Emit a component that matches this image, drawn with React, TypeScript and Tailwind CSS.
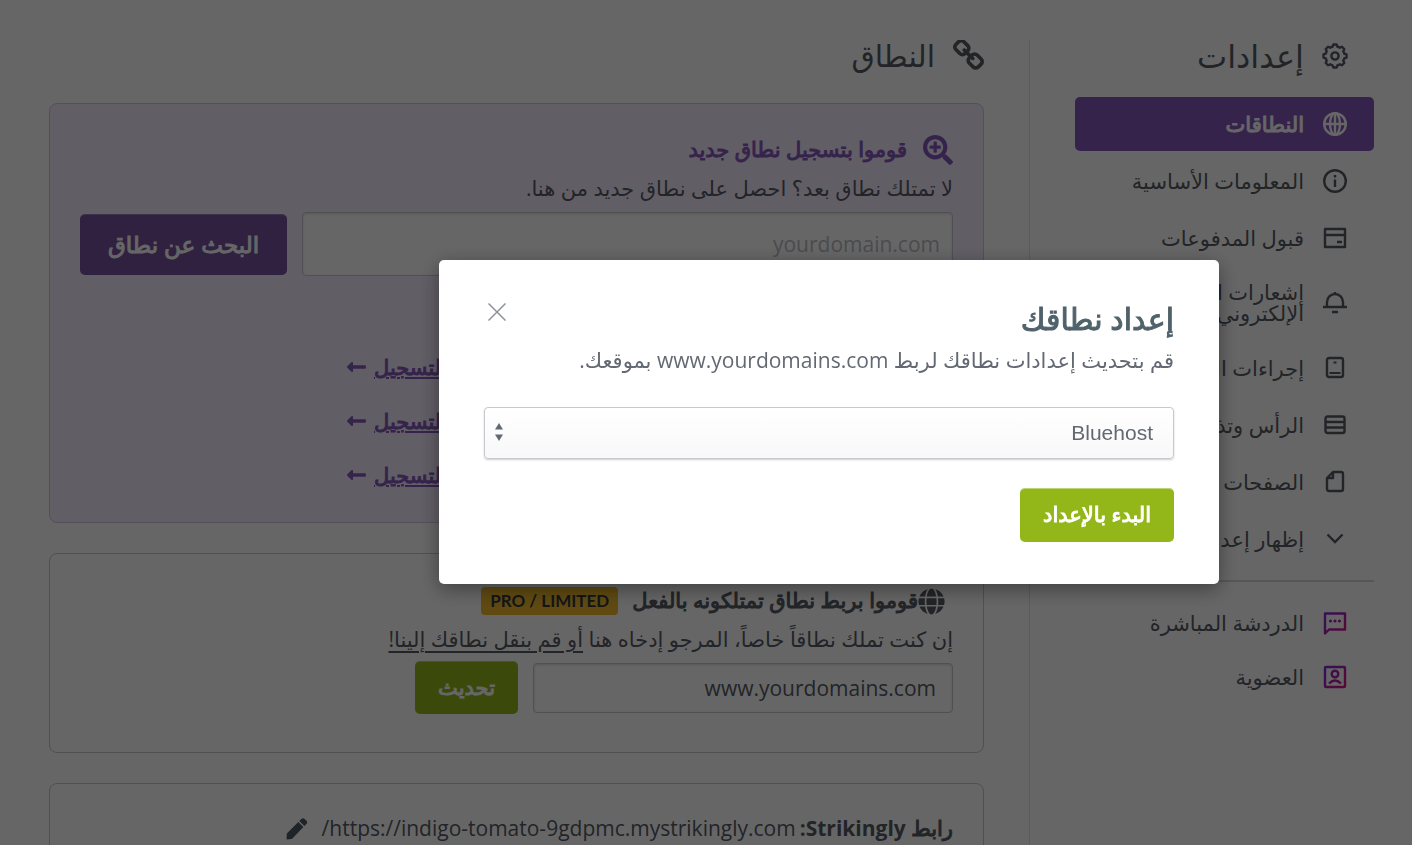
import type { ReactNode } from 'react'
import { FaGlobe, FaSearchPlus } from 'react-icons/fa'

interface NavItem {
  label: string
  icon: ReactNode
  active?: boolean
  tall?: boolean
}

function Icon({ children }: { children: ReactNode }) {
  return (
    <svg viewBox="0 0 24 24" className="w-6 h-6 shrink-0" fill="none" stroke="currentColor" strokeWidth={2.4} strokeLinejoin="round" aria-hidden="true">
      {children}
    </svg>
  )
}

const gearPoints = Array.from({ length: 8 }, (_, i) => i * 45)
  .flatMap(deg => [[deg - 15, 9.6], [deg - 8, 11.6], [deg + 8, 11.6], [deg + 15, 9.6]])
  .map(([deg, r]) => {
    const a = (deg * Math.PI) / 180
    return `${(13 + r * Math.sin(a)).toFixed(2)},${(13 - r * Math.cos(a)).toFixed(2)}`
  })
  .join(' ')

function GearIcon() {
  return (
    <svg viewBox="0 0 26 26" className="w-[26px] h-[26px] shrink-0" fill="none" stroke="currentColor" strokeWidth={2.4} strokeLinejoin="round" aria-hidden="true">
      <polygon points={gearPoints} />
      <circle cx="13" cy="13" r="3.6" />
    </svg>
  )
}

function ChainIcon() {
  return (
    <svg viewBox="80 80 1632 1632" className="w-[31px] h-[31px] shrink-0" fill="currentColor" aria-hidden="true">
      <path d="M1520 1216q0-40-28-68l-208-208q-28-28-68-28-42 0-72 32 3 3 19 18.500t21.500 21.500 15 19 13 25.500 3.500 27.500q0 40-28 68t-68 28q-15 0-27.500-3.500t-25.500-13-19-15-21.500-21.500-18.500-19q-33 31-33 73 0 40 28 68l206 207q27 27 68 27 40 0 68-26l147-146q28-28 28-67zm-703-705q0-40-28-68l-206-207q-28-28-68-28-39 0-68 27l-147 146q-28 28-28 67 0 40 28 68l208 208q27 27 68 27 42 0 72-31-3-3-19-18.500t-21.500-21.500-15-19-13-25.500-3.500-27.500q0-40 28-68t68-28q15 0 27.500 3.500t25.500 13 19 15 21.500 21.500 18.500 19q33-31 33-73zm895 705q0 120-85 203l-147 146q-83 83-203 83-121 0-204-85l-206-207q-83-83-83-203 0-123 88-209l-88-88q-86 88-208 88-120 0-204-84l-208-208q-84-84-84-204t85-203l147-146q83-83 203-83 121 0 204 85l206 207q83 83 83 203 0 123-88 209l88 88q86-88 208-88 120 0 204 84l208 208q84 84 84 204z" />
    </svg>
  )
}

function PencilIcon() {
  return (
    <svg viewBox="0 0 22 22" className="w-[22px] h-[22px]" fill="currentColor" aria-hidden="true">
      <path d="M0.800 15.600 12.300 4l5.100 5.100L6.400 20.400q-.6.600-1.400.700l-3.600.400q-.9 0-.9-.9zM13.300 3l2-2a2.400 2.400 0 0 1 3.400 0l1.700 1.700a2.400 2.400 0 0 1 0 3.400l-2 2z" />
    </svg>
  )
}

function ArrowLeftIcon() {
  return (
    <svg viewBox="0 0 19 10" className="w-[19px] h-[10px]" fill="currentColor" aria-hidden="true">
      <path d="M0.300 4.300 4.400.3Q6-.5 6 1v2.200H18q.9 0 .9.800v2q0 .8-.9.800H6V9q0 1.500-1.600.7L.3 5.700q-.6-.7 0-1.400z" />
    </svg>
  )
}

const navItems: NavItem[] = [
  {
    label: 'النطاقات',
    active: true,
    icon: <Icon><circle cx="12" cy="12" r="10.800" /><ellipse cx="12" cy="12" rx="5" ry="10.800" /><path d="M1 12h22M12 1v22" /></Icon>,
  },
  {
    label: 'المعلومات الأساسية',
    icon: <Icon><circle cx="12" cy="12" r="10.800" /><path d="M12 6v2.500M12 10.500V18" /></Icon>,
  },
  {
    label: 'قبول المدفوعات',
    icon: <Icon><path d="M2 3h20v18H2zM2 9h20M14 16h5" /></Icon>,
  },
  {
    label: 'إشعارات البريد الإلكتروني',
    tall: true,
    icon: <Icon><path d="M0 16h24M4 16v-5a8 8 0 0 1 16 0v5M12 3V1M9 21h6" /></Icon>,
  },
  {
    label: 'إجراءات الخصوصية',
    icon: <Icon><rect x="4" y="2" width="16" height="19" rx="2" /><path d="M6.500 17h11M10.500 6.500h3" strokeWidth={2} /></Icon>,
  },
  {
    label: 'الرأس وتذييل الصفحة',
    icon: <Icon><rect x="2.500" y="3.500" width="19" height="16.500" rx="2" /><path d="M2.500 9h19M2.500 14.500h19" /></Icon>,
  },
  {
    label: 'الصفحات',
    icon: <Icon><path d="M10 2h8q2 0 2 2v15q0 2-2 2H6q-2 0-2-2V8zM10 2v6H4" /></Icon>,
  },
  {
    label: 'إظهار إعدادات متقدمة',
    icon: <Icon><path d="m4.500 7.500 7.500 7.500 7.500-7.500" strokeLinejoin="miter" /></Icon>,
  },
]

function Gradient({ id }: { id: string }) {
  return (
    <defs>
      <linearGradient id={id} x1="0" y1="0" x2="24" y2="24" gradientUnits="userSpaceOnUse">
        <stop offset="0" stopColor="#7a2fe0" />
        <stop offset="1" stopColor="#e6127a" />
      </linearGradient>
    </defs>
  )
}

const helpItems: NavItem[] = [
  {
    label: 'الدردشة المباشرة',
    icon: (
      <Icon>
        <Gradient id="chat" />
        <path d="M2 2.500h20v16H6l-4 4z" stroke="url(#chat)" />
        <g fill="url(#chat)" stroke="none">
          <circle cx="7.500" cy="10" r="1.600" />
          <circle cx="12" cy="10" r="1.600" />
          <circle cx="16.500" cy="10" r="1.600" />
        </g>
      </Icon>
    ),
  },
  {
    label: 'العضوية',
    icon: (
      <Icon>
        <Gradient id="member" />
        <rect x="2" y="2" width="20" height="20" rx="1" stroke="url(#member)" />
        <circle cx="12" cy="9" r="3.300" stroke="url(#member)" />
        <path d="M6 18.500q6-6 12 0" stroke="url(#member)" />
      </Icon>
    ),
  },
]

function NavLink({ item }: { item: NavItem }) {
  return (
    <a
      href="#"
      className={`flex items-center gap-[19px] pr-[27px] pl-4 rounded-[5px] text-[21px] leading-[21px] ${item.tall ? 'h-[70px]' : 'h-[54px]'} ${item.active ? 'bg-[#8759be] text-white [-webkit-text-stroke:1px]' : 'text-[#565b64]'}`}
    >
      {item.icon}
      <span className={item.tall ? 'w-[150px]' : 'whitespace-nowrap'}>{item.label}</span>
    </a>
  )
}

function SettingsNav() {
  return (
    <aside className="w-[299px] shrink-0">
      <h1 className="flex items-center gap-[18px] h-8 pr-[26px] text-[32px] leading-8 text-[#565b64]">
        <GearIcon />
        إعدادات
      </h1>
      <nav className="mt-[25px]">
        <div className="flex flex-col gap-[3px]">
          {navItems.map(item => <NavLink key={item.label} item={item} />)}
        </div>
        <hr className="my-[14px] border-t-2 border-[#d6d8dc]" />
        {helpItems.map(item => <NavLink key={item.label} item={item} />)}
      </nav>
    </aside>
  )
}

function RegisterCard() {
  return (
    <section className="h-[420px] px-[30px] pt-[30px] border border-[#cfc8e0] rounded-lg bg-[#f4ebff]">
      <h3 className="flex items-center gap-4 h-8 text-[21px] text-[#8759be] [-webkit-text-stroke:1px]">
        <FaSearchPlus className="w-[30px] h-[30px]" />
        قوموا بتسجيل نطاق جديد
      </h3>
      <p className="mt-[6px] h-8 text-[21px] leading-8 text-[#565b64]">لا تمتلك نطاق بعد؟ احصل على نطاق جديد من هنا.</p>
      <div className="flex items-center gap-[15px] mt-2">
        <input
          aria-label="نطاق جديد"
          placeholder="yourdomain.com"
          className="flex-1 min-w-0 h-16 px-3 border border-[#c6c9cd] rounded bg-white text-[21px] placeholder:text-[#b9bcc2] shadow-[inset_0_1px_3px_rgba(0,0,0,0.15)]"
        />
        <button className="h-[61px] px-7 rounded-[5px] bg-[#7853a2] text-white text-[23px] [-webkit-text-stroke:1px] shadow-[inset_0_2px_0_-1px_rgba(255,255,255,0.25)]">
          البحث عن نطاق
        </button>
      </div>
      <ul className="flex flex-col gap-[22px] mt-[75px] pl-[267px]">
        {['com', 'net', 'org'].map(tld => (
          <li key={tld} className="flex justify-end h-8 text-[21px] leading-8 text-[#8759be]">
            <a href="#" className="flex items-center gap-2">
              <span className="underline underline-offset-2 decoration-2 [-webkit-text-stroke:1px]">التسجيل</span>
              <ArrowLeftIcon />
            </a>
          </li>
        ))}
      </ul>
    </section>
  )
}

function ConnectCard() {
  return (
    <section className="h-[200px] px-[30px] pt-[31px] border border-[#c6c9cd] rounded-lg">
      <div className="flex items-center h-8">
        <h3 className="flex items-center pr-2 text-[21px] text-[#565b64] [-webkit-text-stroke:1px]">
          <FaGlobe className="w-[27px] h-[27px]" />
          قوموا بربط نطاق تمتلكونه بالفعل
        </h3>
        <span className="mr-[14px] px-[9px] rounded bg-[#efb92d] font-['Lato'] text-[17px] leading-7 font-bold text-[#33363b]" dir="ltr">PRO / LIMITED</span>
      </div>
      <p className="mt-[6px] h-8 text-[21px] leading-8 text-[#565b64]">
        إن كنت تملك نطاقاً خاصاً، المرجو إدخاه هنا <a href="#" className="underline underline-offset-4 decoration-2">أو قم بنقل نطاقك إلينا!</a>
      </p>
      <div className="flex items-center gap-[15px] mt-[6px]">
        <input
          aria-label="نطاقك"
          defaultValue="www.yourdomains.com"
          className="w-[420px] min-w-0 h-[50px] px-4 border border-[#c6c9cd] rounded bg-white text-[21px] text-[#565b64] shadow-[inset_0_1px_3px_rgba(0,0,0,0.15)]"
        />
        <button className="h-[53px] px-[23px] rounded-[5px] bg-[#93b719] text-white text-[21px] [-webkit-text-stroke:1px] shadow-[inset_0_2px_0_-1px_rgba(255,255,255,0.35)]">تحديث</button>
      </div>
    </section>
  )
}

function SiteUrlCard() {
  return (
    <section className="h-[200px] px-[30px] pt-[29px] border border-[#c6c9cd] rounded-lg">
      <div className="flex items-center h-8 text-[21px] text-[#565b64]">
        <strong className="ml-1">
          <span className="font-normal [-webkit-text-stroke:1px]">رابط</span> Strikingly:
        </strong>
        <span>https://indigo-tomato-9gdpmc.mystrikingly.com/</span>
        <button aria-label="تعديل" className="mr-[14px] text-[#4b5b63]"><PencilIcon /></button>
      </div>
    </section>
  )
}

function SetupDialog() {
  return (
    <div className="fixed inset-0 flex items-center justify-center pl-[246px] pb-px bg-black/60">
      <div role="dialog" aria-modal="true" aria-labelledby="setup-title" className="w-[780px] px-[45px] pt-[41px] pb-[42px] rounded-[5px] bg-white shadow-[0_5px_20px_rgba(0,0,0,0.4)]">
        <div className="flex justify-between">
          <h2 id="setup-title" className="h-9 text-[30px] leading-9 text-[#50626b] [-webkit-text-stroke:1px]">إعداد نطاقك</h2>
          <button aria-label="إغلاق" className="flex items-center justify-center w-[26px] h-[22px]">
            <svg viewBox="0 0 18 18" className="w-[18px] h-[18px]" stroke="#8e9297" strokeWidth={1.500} aria-hidden="true">
              <path d="M0.500.5l17 17M17.500.5l-17 17" />
            </svg>
          </button>
        </div>
        <p className="mt-[7px] text-[21px] leading-8 text-[#636972]">قم بتحديث إعدادات نطاقك لربط www.yourdomains.com بموقعك.</p>
        <div className="relative mt-[31px]">
          <select
            aria-label="مزود النطاق"
            className="block w-full h-[52px] px-5 appearance-none border border-[#c6c9cd] rounded bg-linear-to-b from-white to-[#f8f8f8] font-['Liberation_Sans',sans-serif] text-[21px] text-[#636972] shadow-[0_1px_2px_rgba(0,0,0,0.2)]"
          >
            <option>Bluehost</option>
          </select>
          <svg viewBox="0 0 8 18" className="absolute left-[11px] top-4 w-2 h-[18px] pointer-events-none" fill="#636972" aria-hidden="true">
            <path d="M4 0l4 6.500H0zM4 18l4-6.500H0z" />
          </svg>
        </div>
        <button className="block mt-[29px] h-[54px] px-[23px] rounded-[5px] bg-[#93b719] text-white text-[21px] [-webkit-text-stroke:1px] shadow-[inset_0_2px_0_-1px_rgba(255,255,255,0.4)]">
          البدء بالإعداد
        </button>
      </div>
    </div>
  )
}

export default function App() {
  return (
    <div dir="rtl" className="h-screen overflow-hidden bg-white font-['Open_Sans','Noto_Sans','DejaVu_Sans',sans-serif]">
      <div className="flex pt-10 pr-[38px] pl-[49px]">
        <SettingsNav />
        <main className="flex-1 min-w-0 mr-[45px] pr-[45px] border-r border-[#e2e4e7]">
          <h2 className="flex items-center gap-[18px] h-[31px] mb-8 text-[30px] leading-8 text-[#565b64]">
            <ChainIcon />
            النطاق
          </h2>
          <div className="flex flex-col gap-[30px]">
            <RegisterCard />
            <ConnectCard />
            <SiteUrlCard />
          </div>
        </main>
      </div>
      <SetupDialog />
    </div>
  )
}
